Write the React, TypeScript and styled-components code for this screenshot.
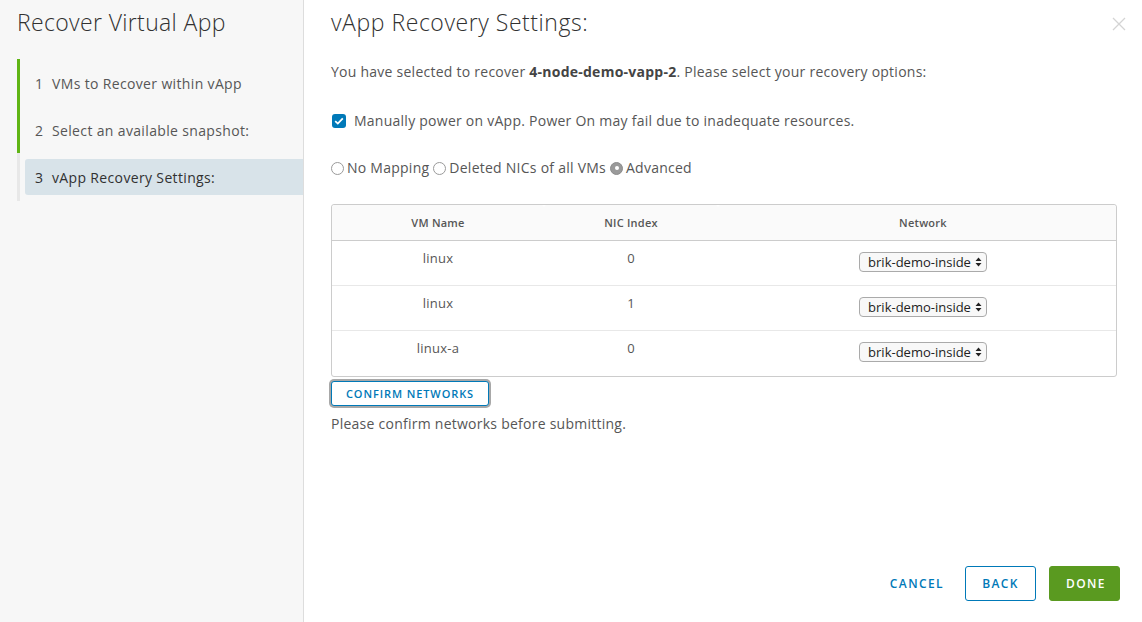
import styled, { createGlobalStyle } from "styled-components";

const GlobalStyle = createGlobalStyle`
  html, body {
    margin: 0;
    padding: 0;
    background: #ffffff;
  }
  body {
    font-family: "Open Sans", "Liberation Sans", sans-serif;
    color: #565656;
    letter-spacing: 0.25px;
  }
`;

interface NicRow {
  vm: string;
  nic: number;
  network: string;
}

const rows: NicRow[] = [
  { vm: "linux", nic: 0, network: "brik-demo-inside" },
  { vm: "linux", nic: 1, network: "brik-demo-inside" },
  { vm: "linux-a", nic: 0, network: "brik-demo-inside" },
];

const steps = [
  { num: 1, label: "VMs to Recover within vApp", state: "done" },
  { num: 2, label: "Select an available snapshot:", state: "done" },
  { num: 3, label: "vApp Recovery Settings:", state: "current" },
] as const;

export default function App() {
  return (
    <>
      <GlobalStyle />
      <Wizard>
        <Sidebar>
          <SideTitle>Recover Virtual App</SideTitle>
          <StepList>
            {steps.map((s) => (
              <StepItem key={s.num} $state={s.state}>
                <StepLabel $active={s.state === "current"}>
                  <StepNum>{s.num}</StepNum>
                  {s.label}
                </StepLabel>
              </StepItem>
            ))}
          </StepList>
        </Sidebar>

        <Main>
          <Header>
            <PageTitle>vApp Recovery Settings:</PageTitle>
            <CloseButton aria-label="close">
              <svg width="14" height="14" viewBox="0 0 14 14">
                <path d="M1 1 L13 13 M13 1 L1 13" stroke="#d4d4d4" strokeWidth="1.3" />
              </svg>
            </CloseButton>
          </Header>

          <Body>
            <Intro>
              You have selected to recover <strong>4-node-demo-vapp-2</strong>. Please select your
              recovery options:
            </Intro>

            <CheckRow>
              <CheckBox>
                <svg width="10" height="8" viewBox="0 0 10 8">
                  <path d="M1.2 4.2 L3.8 6.6 L8.8 1.4" stroke="#fff" strokeWidth="1.8" fill="none" />
                </svg>
              </CheckBox>
              Manually power on vApp. Power On may fail due to inadequate resources.
            </CheckRow>

            <RadioRow>
              <RadioOption>
                <Radio />
                No Mapping
              </RadioOption>
              <RadioOption>
                <Radio />
                Deleted NICs of all VMs
              </RadioOption>
              <RadioOption>
                <Radio $checked />
                Advanced
              </RadioOption>
            </RadioRow>

            <Table>
              <thead>
                <tr>
                  <Th style={{ width: 212 }}>VM Name</Th>
                  <Th style={{ width: 174 }}>NIC Index</Th>
                  <Th $pad>Network</Th>
                </tr>
              </thead>
              <tbody>
                {rows.map((r, i) => (
                  <tr key={i}>
                    <Td>{r.vm}</Td>
                    <Td>{r.nic}</Td>
                    <Td $pad>
                      <SelectBox>
                        {r.network}
                        <svg width="7" height="10" viewBox="0 0 7 10">
                          <path d="M0.5 4 L3.5 0.5 L6.5 4 Z M0.5 6 L3.5 9.5 L6.5 6 Z" fill="#222" />
                        </svg>
                      </SelectBox>
                    </Td>
                  </tr>
                ))}
              </tbody>
            </Table>

            <ConfirmButton>Confirm Networks</ConfirmButton>
            <Note>Please confirm networks before submitting.</Note>
          </Body>

          <Footer>
            <FlatButton>Cancel</FlatButton>
            <OutlineButton>Back</OutlineButton>
            <PrimaryButton>Done</PrimaryButton>
          </Footer>
        </Main>
      </Wizard>
    </>
  );
}

const Wizard = styled.div`
  display: flex;
  width: 1142px;
  height: 622px;
  overflow: hidden;
`;

const Sidebar = styled.aside`
  width: 304px;
  flex-shrink: 0;
  background: #f7f7f7;
  border-right: 1px solid #dddddd;
  padding: 8px 0 0 17px;
  box-sizing: border-box;
`;

const SideTitle = styled.h1`
  margin: 0;
  font-size: 23px;
  font-weight: 300;
  line-height: 28px;
  letter-spacing: 0.35px;
  color: #313131;
`;

const StepList = styled.ul`
  list-style: none;
  margin: 23px 0 0;
  padding: 0;
`;

const StepItem = styled.li<{ $state: "done" | "current" }>`
  border-left: 3px solid ${({ $state }) => ($state === "done" ? "#60b515" : "#e8e8e8")};
  padding: ${({ $state }) => ($state === "done" ? "12px 0 11px 5px" : "6px 0 6px 5px")};
`;

const StepLabel = styled.div<{ $active: boolean }>`
  display: flex;
  align-items: center;
  height: 24px;
  padding: ${({ $active }) => ($active ? "6px 0 6px 10px" : "0 0 0 10px")};
  background: ${({ $active }) => ($active ? "#d8e3e9" : "transparent")};
  border-radius: 3px 0 0 3px;
  font-size: 14px;
  letter-spacing: 0.35px;
  color: ${({ $active }) => ($active ? "#313131" : "#565656")};
`;

const StepNum = styled.span`
  display: inline-block;
  width: 17px;
`;

const Main = styled.main`
  flex: 1;
  display: flex;
  flex-direction: column;
  padding: 8px 22px 21px 27px;
  box-sizing: border-box;
  min-width: 0;
`;

const Header = styled.div`
  display: flex;
  justify-content: space-between;
  align-items: flex-start;
`;

const PageTitle = styled.h2`
  margin: 0;
  font-size: 23px;
  font-weight: 300;
  line-height: 28px;
  letter-spacing: 0.55px;
  color: #313131;
`;

const CloseButton = styled.button`
  border: none;
  background: none;
  padding: 0;
  margin: 9px -6px 0 0;
  width: 14px;
  height: 14px;
  display: flex;
`;

const Body = styled.div`
  flex: 1;
  font-size: 14px;
  color: #565656;
`;

const Intro = styled.p`
  margin: 25px 0 0;
  line-height: 22px;
  strong {
    font-weight: 700;
    color: #444;
  }
`;

const CheckRow = styled.label`
  display: flex;
  align-items: center;
  gap: 8px;
  margin-top: 28px;
  line-height: 20px;
`;

const CheckBox = styled.span`
  width: 14px;
  height: 14px;
  border-radius: 3px;
  background: #0079b8;
  display: flex;
  align-items: center;
  justify-content: center;
  margin-left: 1px;
`;

const RadioRow = styled.div`
  display: flex;
  align-items: center;
  gap: 4px;
  margin-top: 27px;
  line-height: 20px;
`;

const RadioOption = styled.label`
  display: flex;
  align-items: center;
  gap: 3px;
`;

const Radio = styled.span<{ $checked?: boolean }>`
  width: 13px;
  height: 13px;
  border-radius: 50%;
  box-sizing: border-box;
  border: 1px solid ${({ $checked }) => ($checked ? "#8c8c8c" : "#9a9a9a")};
  background: ${({ $checked }) => ($checked ? "#9a9a9a" : "#fff")};
  position: relative;
  &::after {
    content: "";
    display: ${({ $checked }) => ($checked ? "block" : "none")};
    position: absolute;
    left: 3.5px;
    top: 3.5px;
    width: 4px;
    height: 4px;
    border-radius: 50%;
    background: #fff;
  }
`;

const Table = styled.table`
  width: calc(100% - 3px);
  margin-top: 26px;
  border-collapse: separate;
  border-spacing: 0;
  border: 1px solid #cccccc;
  border-radius: 3px;
  font-size: 13px;
`;

const Th = styled.th<{ $pad?: boolean }>`
  height: 36px;
  box-sizing: border-box;
  background: #fafafa;
  border-bottom: 1px solid #cccccc;
  font-size: 11px;
  font-weight: 600;
  color: #565656;
  text-align: center;
  padding: 0 0 1px ${({ $pad }) => ($pad ? "12px" : "0")};
  border-radius: 3px 3px 0 0;
`;

const Td = styled.td<{ $pad?: boolean }>`
  height: 45px;
  box-sizing: border-box;
  text-align: center;
  vertical-align: top;
  padding: ${({ $pad }) => ($pad ? "11px 0 0 12px" : "8px 0 0")};
  color: #565656;
  tr:not(:last-child) > & {
    border-bottom: 1px solid #e8e8e8;
  }
`;

const SelectBox = styled.span`
  display: inline-flex;
  align-items: center;
  gap: 4px;
  height: 20px;
  padding: 0 4px 0 8px;
  border: 1px solid #aaaaaa;
  border-radius: 4px;
  background: #f8f8f8;
  font-size: 13px;
  letter-spacing: 0;
  color: #222;
  box-sizing: border-box;
`;

const ConfirmButton = styled.button`
  display: block;
  margin-top: 4px;
  height: 25px;
  width: 158px;
  border: 1px solid #0079b8;
  border-radius: 3px;
  background: #fff;
  color: #0079b8;
  font-family: inherit;
  font-size: 11px;
  font-weight: 600;
  letter-spacing: 0.9px;
  text-transform: uppercase;
  box-shadow: 0 0 0 2px #a8a8a8;
  padding: 0;
`;

const Note = styled.p`
  margin: 8px 0 0;
  line-height: 20px;
`;

const Footer = styled.div`
  display: flex;
  justify-content: flex-end;
  align-items: center;
  gap: 13px;
`;

const ButtonBase = styled.button`
  height: 35px;
  padding: 0 16px;
  border-radius: 3px;
  font-family: inherit;
  font-size: 12px;
  font-weight: 600;
  letter-spacing: 1.4px;
  text-transform: uppercase;
`;

const FlatButton = styled(ButtonBase)`
  border: 1px solid transparent;
  background: none;
  color: #0079b8;
  padding: 0 7px;
`;

const OutlineButton = styled(ButtonBase)`
  border: 1px solid #0079b8;
  background: #fff;
  color: #0079b8;
  width: 71px;
`;

const PrimaryButton = styled(ButtonBase)`
  border: 1px solid #5a9a20;
  background: #5a9a20;
  color: #fff;
  width: 71px;
`;
